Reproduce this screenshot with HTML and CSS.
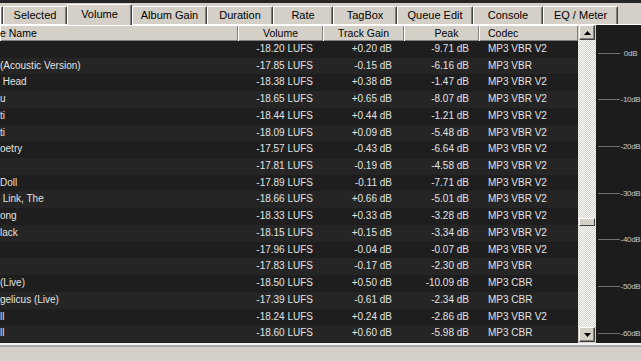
FILE: index.html
```html
<!DOCTYPE html>
<html lang="en">
<head>
  <meta charset="UTF-8">
  <title>Volume</title>
  <link rel="stylesheet" href="styles.css">
</head>
<body>

<div class="topstrip"></div>

<div class="tabs">
  <div class="tab"></div>
  <div class="tab">Selected</div>
  <div class="tab active">Volume</div>
  <div class="tab">Album Gain</div>
  <div class="tab">Duration</div>
  <div class="tab">Rate</div>
  <div class="tab">TagBox</div>
  <div class="tab">Queue Edit</div>
  <div class="tab">Console</div>
  <div class="tab">EQ / Meter</div>
</div>

<div class="main">
  <div class="list">
    <div class="header">
      <div class="hcell name">e Name</div>
      <div class="hcell">Volume</div>
      <div class="hcell">Track Gain</div>
      <div class="hcell peak">Peak</div>
      <div class="hcell codec">Codec</div>
    </div>
    <div class="rows" id="rows"></div>
  </div>

  <div class="scrollbar">
    <div class="sbtn up">
      <svg width="7" height="4" viewBox="0 0 7 4"><polygon points="3.5,0 7,4 0,4" fill="#000"/></svg>
    </div>
    <div class="track">
      <div class="thumb"></div>
    </div>
    <div class="sbtn down">
      <svg width="7" height="4" viewBox="0 0 7 4"><polygon points="0,0 7,0 3.5,4" fill="#000"/></svg>
    </div>
  </div>

  <div class="meter">
    <div class="tick"><span class="tick-line"></span><span class="tick-label">0dB</span></div>
    <div class="tick"><span class="tick-line"></span><span class="tick-label">-10dB</span></div>
    <div class="tick"><span class="tick-line"></span><span class="tick-label">-20dB</span></div>
    <div class="tick"><span class="tick-line"></span><span class="tick-label">-30dB</span></div>
    <div class="tick"><span class="tick-line"></span><span class="tick-label">-40dB</span></div>
    <div class="tick"><span class="tick-line"></span><span class="tick-label">-50dB</span></div>
    <div class="tick"><span class="tick-line"></span><span class="tick-label">-60dB</span></div>
  </div>
</div>

<div class="statusbar"></div>

<script>
// name column is scrolled to the right, so only the tail of each name shows
const tracks = [
  ["", "-18.20", "+0.20", "-9.71", "MP3 VBR V2"],
  ["(Acoustic Version)", "-17.85", "-0.15", "-6.16", "MP3 VBR"],
  [" Head", "-18.38", "+0.38", "-1.47", "MP3 VBR V2"],
  ["u", "-18.65", "+0.65", "-8.07", "MP3 VBR V2"],
  ["ti", "-18.44", "+0.44", "-1.21", "MP3 VBR V2"],
  ["ti", "-18.09", "+0.09", "-5.48", "MP3 VBR V2"],
  ["oetry", "-17.57", "-0.43", "-6.64", "MP3 VBR V2"],
  ["", "-17.81", "-0.19", "-4.58", "MP3 VBR V2"],
  ["Doll", "-17.89", "-0.11", "-7.71", "MP3 VBR V2"],
  [" Link, The", "-18.66", "+0.66", "-5.01", "MP3 VBR V2"],
  ["ong", "-18.33", "+0.33", "-3.28", "MP3 VBR V2"],
  ["lack", "-18.15", "+0.15", "-3.34", "MP3 VBR V2"],
  ["", "-17.96", "-0.04", "-0.07", "MP3 VBR V2"],
  ["", "-17.83", "-0.17", "-2.30", "MP3 VBR"],
  ["(Live)", "-18.50", "+0.50", "-10.09", "MP3 CBR"],
  ["gelicus (Live)", "-17.39", "-0.61", "-2.34", "MP3 CBR"],
  ["ll", "-18.24", "+0.24", "-2.86", "MP3 VBR V2"],
  ["ll", "-18.60", "+0.60", "-5.98", "MP3 CBR"]
];

document.getElementById("rows").innerHTML = tracks.map(t => `
  <div class="row">
    <div class="cell name">${t[0]}</div>
    <div class="cell vol">${t[1]} LUFS</div>
    <div class="cell gain">${t[2]} dB</div>
    <div class="cell peak">${t[3]} dB</div>
    <div class="cell codec">${t[4]}</div>
  </div>
`).join("");
</script>

</body>
</html>
```

FILE: styles.css
```css
body {
  margin: 0;
  width: 641px;
  height: 361px;
  overflow: hidden;
  background: #d4d0c8;
  font-family: "Liberation Sans", Arial, sans-serif;
  font-size: 11px;
  color: #000;
}
.topstrip {
  height: 3px;
  background: #262626;
}

/* tab strip */
.tabs {
  display: grid;
  grid-template-columns: 3px 64px 65px 75px 66px 60px 64px 76px 70px 75px;
  align-items: end;
  height: 21px;
  border-bottom: 1px solid #fff;
}
.tab {
  box-sizing: border-box;
  height: 18px;
  line-height: 17px;
  text-align: center;
  white-space: nowrap;
  overflow: hidden;
  background: #d4d0c8;
  border-top: 1px solid #fff;
  border-left: 1px solid #fff;
  border-right: 1px solid #404040;
  box-shadow: inset -1px 0 #808080;
  border-radius: 2px 2px 0 0;
}
.tab.active {
  height: 21px;
  line-height: 18px;
  margin-bottom: -1px;
}

.main {
  display: flex;
  height: 318px;
}

/* list view */
.list {
  width: 578px;
  display: flex;
  flex-direction: column;
  background: #1e1e1e;
  font-size: 10px;
}
.header, .row {
  display: grid;
  grid-template-columns: 238px 85px 81px 75px 99px;
}
.header {
  height: 16px;
  background: #d4d0c8;
  font-size: 10.5px;
}
.hcell {
  line-height: 16px;
  text-align: center;
  white-space: nowrap;
  overflow: hidden;
  box-shadow: inset 1px 1px #fff, inset -1px -1px #808080;
}
.hcell.name {
  text-align: left;
}
.hcell.peak {
  padding-left: 10px;
}
.hcell.codec {
  text-align: left;
  padding-left: 9px;
}
.row {
  height: 16.72px;
  line-height: 16.72px;
  color: #e2e2e2;
  background: #1e1e1e;
}
.row:nth-child(even) {
  background: #252525;
}
.cell {
  white-space: pre;
  overflow: hidden;
}
.cell.vol { text-align: right; padding-right: 10px; }
.cell.gain { text-align: right; padding-right: 12px; }
.cell.peak { text-align: right; padding-right: 10px; }
.cell.codec { padding-left: 9px; }

/* scrollbar */
.scrollbar {
  width: 18px;
  display: flex;
  flex-direction: column;
  background: #d4d0c8;
}
.sbtn {
  box-sizing: border-box;
  width: 16px;
  height: 15px;
  margin: 0 1px;
  display: flex;
  align-items: center;
  justify-content: center;
  background: #d4d0c8;
  border: 1px solid;
  border-color: #fff #404040 #404040 #fff;
  box-shadow: inset -1px -1px #808080;
}
.sbtn.down {
  margin-bottom: 1px;
}
.track {
  flex: 1;
  background: repeating-conic-gradient(#d4d0c8 0 25%, #fff 0 50%) 0 0 / 2px 2px;
}
.thumb {
  box-sizing: border-box;
  height: 8px;
  margin: 178px 1px 0;
  background: #d4d0c8;
  border: 1px solid;
  border-color: #fff #404040 #404040 #fff;
}

/* level meter */
.meter {
  flex: 1;
  background: #1c1c1c;
  padding-top: 5px;
  overflow: hidden;
}
.tick {
  height: 46.67px;
  display: flex;
  align-items: center;
}
.tick-line {
  margin-left: 2px;
  width: 22px;
  height: 1px;
  background: #707070;
}
.tick-label {
  width: 21px;
  text-align: center;
  white-space: nowrap;
  font-size: 8px;
  letter-spacing: -0.3px;
  color: #c8c8c8;
}

.statusbar {
  height: 16px;
  border-top: 2px solid #f4f4f4;
  box-shadow: inset 0 2px #a8a8a8;
}
```
